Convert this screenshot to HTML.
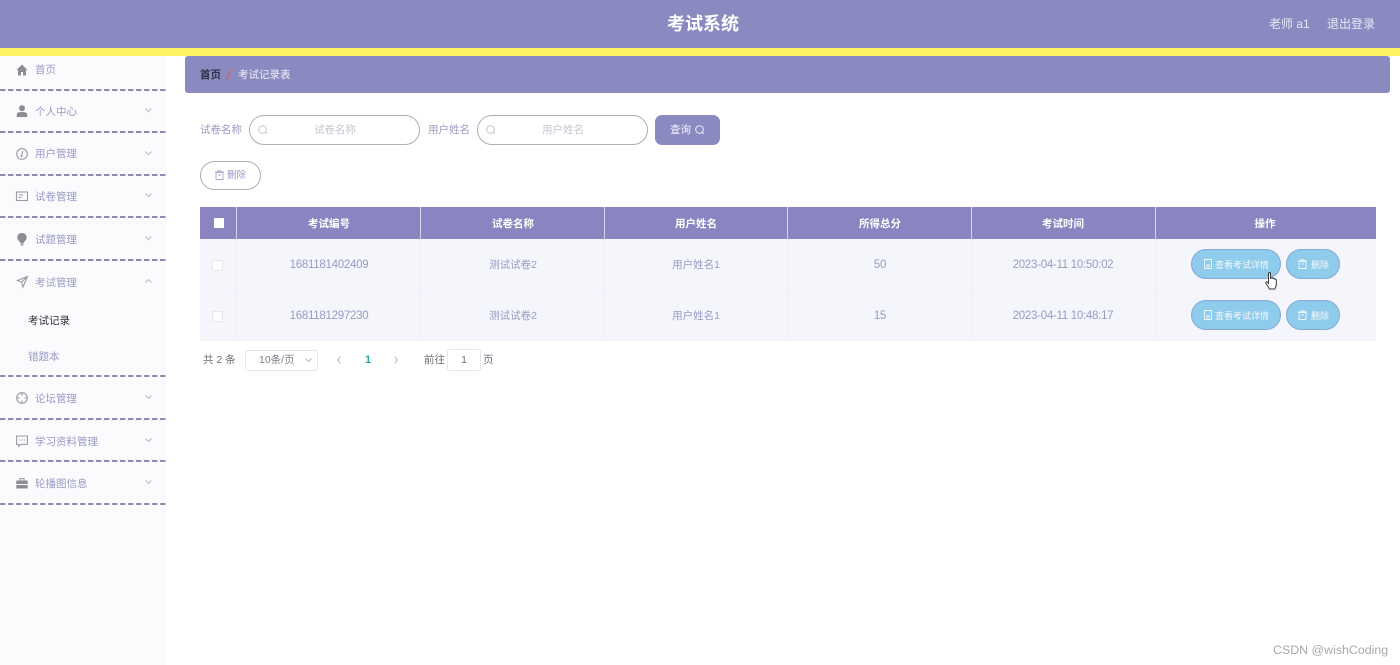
<!DOCTYPE html>
<html lang="zh"><head><meta charset="utf-8"><title>考试系统</title>
<style>
*{box-sizing:border-box}
html,body{margin:0;padding:0;width:1400px;height:665px;overflow:hidden;background:#fff}
body{position:relative;font-family:"Liberation Sans","Noto Sans CJK SC",sans-serif;font-size:10.5px;color:#9a9ac4}
#w{position:absolute;left:0;top:0;width:1400px;height:665px;overflow:hidden;filter:blur(.35px)}
.a{position:absolute;white-space:nowrap;line-height:1}
.c{transform:translateX(-50%)}
.n{font-size:11.5px;letter-spacing:-.28px}
.dash{position:absolute;left:0;width:167px;height:2px;background:repeating-linear-gradient(90deg,#8e8eb2 0,#8e8eb2 5.5px,transparent 5.5px,transparent 8px)}
.th{color:#fff;font-weight:bold}
.vl{position:absolute;top:207px;width:1px;height:32px;background:#d6d6ea}
.vr{position:absolute;top:239px;width:1px;height:102px;background:#f0f1f8}
.pill{position:absolute;height:30px;border-radius:15px;background:#8fcbea;border:1px solid #84abd2;color:#f4fafd;font-size:9px;line-height:30px;white-space:nowrap}
.cb{position:absolute;left:212px;width:11px;height:11px;background:#fff;border:1px solid #e6e6ef;border-radius:2px}
.inp{position:absolute;top:115px;height:30px;width:171px;border:1px solid #aeaeb8;border-radius:15px;background:#fff}
svg{position:absolute;overflow:visible}
.s{fill:none;stroke:#9b9ba3;stroke-width:1.1}
.ch{fill:none;stroke:#b4b4c4;stroke-width:.9}
</style></head><body><div id="w">
<div style="position:absolute;left:0;top:0;width:1400px;height:48px;background:#8a8ac1"></div>
<div style="position:absolute;left:0;top:48px;width:1400px;height:8px;background:#fdf464"></div>
<div class="a c" style="left:703px;top:15px;font-size:18px;font-weight:bold;color:#fff">考试系统</div>
<div class="a" style="left:1269px;top:18px;font-size:12px;color:#e9e9f5">老师 a1</div>
<div class="a" style="left:1327px;top:18px;font-size:12px;color:#e9e9f5">退出登录</div>

<div style="position:absolute;left:0;top:56px;width:167px;height:609px;background:#fbfbfe"></div>
<div class="dash" style="top:89px"></div>
<div class="dash" style="top:131px"></div>
<div class="dash" style="top:174px"></div>
<div class="dash" style="top:216px"></div>
<div class="dash" style="top:259px"></div>
<div class="dash" style="top:375px"></div>
<div class="dash" style="top:418px"></div>
<div class="dash" style="top:460px"></div>
<div class="dash" style="top:503px"></div>

<svg style="left:16px;top:64px" width="12" height="12"><path d="M6 .5 .5 6H2v5.500h3V8h2v3.500h3V6h1.500z" fill="#8c8c94"/></svg>
<div class="a" style="left:35px;top:65px">首页</div>
<svg style="left:16px;top:105px" width="12" height="12"><circle cx="6" cy="3.200" r="3" fill="#8c8c94"/><path d="M.8 12V9.500C.8 7.500 3 7 6 7s5.200.5 5.200 2.500V12z" fill="#8c8c94"/></svg>
<div class="a" style="left:35px;top:107px">个人中心</div>
<svg style="left:16px;top:148px" width="12" height="12"><circle class="s" cx="6" cy="6" r="5.300"/><path class="s" d="M6.800 3 5.800 7"/><circle cx="5.600" cy="8" r="1.100" fill="#9b9ba3"/></svg>
<div class="a" style="left:35px;top:149px">用户管理</div>
<svg style="left:16px;top:191px" width="12" height="11"><rect class="s" x=".5" y="1" width="11" height="8.500"/><path class="s" d="M3 4h4M3 6.500h2.500"/></svg>
<div class="a" style="left:35px;top:192px">试卷管理</div>
<svg style="left:17px;top:233px" width="11" height="13"><path d="M5 0C2 0 .3 2 .3 4.500.3 7 3 8.500 3.500 10.500h3C7 8.500 9.700 7 9.700 4.500 9.700 2 8 0 5 0z" fill="#8c8c94"/><rect x="3.800" y="11" width="2.500" height="1.500" fill="#8c8c94"/></svg>
<div class="a" style="left:35px;top:235px">试题管理</div>
<svg style="left:17px;top:276px" width="11" height="12"><path class="s" d="M10.500.5.500 4.500l4 1.500 1.500 5zM4.500 6l6-5.500"/></svg>
<div class="a" style="left:35px;top:278px">考试管理</div>
<div class="a" style="left:28px;top:316px;color:#2c2c34">考试记录</div>
<div class="a" style="left:28px;top:352px">错题本</div>
<svg style="left:16px;top:392px" width="12" height="12"><circle class="s" cx="6" cy="6" r="5.300"/><path class="s" d="M6 .5v3M6 8.500v3M.5 6h3M8.500 6h3"/></svg>
<div class="a" style="left:35px;top:394px">论坛管理</div>
<svg style="left:16px;top:435px" width="12" height="12"><path class="s" d="M.6 1h10.800v8.300H5L2.600 11.300V9.300H.6z"/><path d="M3 5h1.200M5.400 5h1.200M7.800 5H9" stroke="#9b9ba3" stroke-width="1.100"/></svg>
<div class="a" style="left:35px;top:437px">学习资料管理</div>
<svg style="left:16px;top:477px" width="12" height="12"><path d="M.3 3.500h11.400V7H.3zM.3 8h11.400v3.500H.3z" fill="#8c8c94"/><path class="s" d="M4 3.500V1.500h4v2"/></svg>
<div class="a" style="left:35px;top:479px">轮播图信息</div>

<svg style="left:145px;top:108px" width="7" height="4"><path class="ch" d="M.5.500 3.500 3.500 6.500.5"/></svg>
<svg style="left:145px;top:151px" width="7" height="4"><path class="ch" d="M.5.500 3.500 3.500 6.500.5"/></svg>
<svg style="left:145px;top:193px" width="7" height="4"><path class="ch" d="M.5.500 3.500 3.500 6.500.5"/></svg>
<svg style="left:145px;top:236px" width="7" height="4"><path class="ch" d="M.5.500 3.500 3.500 6.500.5"/></svg>
<svg style="left:145px;top:279px" width="7" height="4"><path class="ch" d="M.5 3.500 3.500.5 6.500 3.500"/></svg>
<svg style="left:145px;top:395px" width="7" height="4"><path class="ch" d="M.5.500 3.500 3.500 6.500.5"/></svg>
<svg style="left:145px;top:438px" width="7" height="4"><path class="ch" d="M.5.500 3.500 3.500 6.500.5"/></svg>
<svg style="left:145px;top:480px" width="7" height="4"><path class="ch" d="M.5.500 3.500 3.500 6.500.5"/></svg>

<div style="position:absolute;left:185px;top:56px;width:1205px;height:37px;background:#8a8ac1;border-radius:3px"></div>
<div class="a" style="left:200px;top:70px;color:#2d2d45;font-weight:bold">首页</div>
<svg style="left:226px;top:69px" width="6" height="11"><path d="M4.500.5 1 10.500" stroke="#d9605e" stroke-width="1.200" fill="none"/></svg>
<div class="a" style="left:238px;top:70px;color:#f2f2f8">考试记录表</div>

<div class="a" style="left:200px;top:125px">试卷名称</div>
<div class="inp" style="left:249px"></div>
<svg style="left:258px;top:125px" width="10" height="10"><circle cx="4.500" cy="4.500" r="3.800" fill="none" stroke="#c4c4cc"/><path d="m7.300 7.300 1.500 1.500" stroke="#c4c4cc"/></svg>
<div class="a" style="left:314px;top:125px;color:#c6c6d2">试卷名称</div>
<div class="a" style="left:428px;top:125px">用户姓名</div>
<div class="inp" style="left:477px"></div>
<svg style="left:486px;top:125px" width="10" height="10"><circle cx="4.500" cy="4.500" r="3.800" fill="none" stroke="#c4c4cc"/><path d="m7.300 7.300 1.500 1.500" stroke="#c4c4cc"/></svg>
<div class="a" style="left:542px;top:125px;color:#c6c6d2">用户姓名</div>
<div style="position:absolute;left:655px;top:115px;width:65px;height:30px;border-radius:7px;background:#8a8ac1"></div>
<div class="a" style="left:670px;top:125px;color:#f4f4fa">查询</div>
<svg style="left:695px;top:125px" width="10" height="10"><circle cx="4.500" cy="4.500" r="3.800" fill="none" stroke="#f0f0f8"/><path d="m7.300 7.300 1.500 1.500" stroke="#f0f0f8"/></svg>

<div style="position:absolute;left:200px;top:161px;width:61px;height:29px;border:1px solid #aeaeb8;border-radius:15px;background:#fff"></div>
<svg style="left:215px;top:170px" width="9" height="10"><path d="M1 2.500h7v7H1zM0 2h9M3 2V.7h3V2M3 5h3" fill="none" stroke="#a8a8c8" stroke-width=".9"/></svg>
<div class="a" style="left:227px;top:171px;font-size:9.500px">删除</div>

<div style="position:absolute;left:200px;top:207px;width:1176px;height:32px;background:#8a85c0"></div>
<div style="position:absolute;left:200px;top:239px;width:1176px;height:102px;background:#f5f6fb"></div>
<div class="vl" style="left:236px"></div><div class="vl" style="left:420px"></div><div class="vl" style="left:604px"></div><div class="vl" style="left:787px"></div><div class="vl" style="left:971px"></div><div class="vl" style="left:1155px"></div>
<div class="vr" style="left:236px"></div><div class="vr" style="left:420px"></div><div class="vr" style="left:604px"></div><div class="vr" style="left:787px"></div><div class="vr" style="left:971px"></div><div class="vr" style="left:1155px"></div>
<div style="position:absolute;left:200px;top:290px;width:1176px;height:1px;background:#f0f1f8"></div>
<div style="position:absolute;left:214px;top:218px;width:10px;height:10px;background:#fff;border-radius:1px"></div>
<div class="a c th" style="left:329px;top:219px">考试编号</div>
<div class="a c th" style="left:513px;top:219px">试卷名称</div>
<div class="a c th" style="left:696px;top:219px">用户姓名</div>
<div class="a c th" style="left:880px;top:219px">所得总分</div>
<div class="a c th" style="left:1063px;top:219px">考试时间</div>
<div class="a c th" style="left:1265px;top:219px">操作</div>

<div class="cb" style="top:260px"></div><div class="cb" style="top:311px"></div>
<div class="a c n" style="left:329px;top:260px">1681181402409</div>
<div class="a c" style="left:513px;top:260px">测试试卷2</div>
<div class="a c" style="left:696px;top:260px">用户姓名1</div>
<div class="a c n" style="left:880px;top:260px">50</div>
<div class="a c n" style="left:1063px;top:260px">2023-04-11 10:50:02</div>
<div class="a c n" style="left:329px;top:311px">1681181297230</div>
<div class="a c" style="left:513px;top:311px">测试试卷2</div>
<div class="a c" style="left:696px;top:311px">用户姓名1</div>
<div class="a c n" style="left:880px;top:311px">15</div>
<div class="a c n" style="left:1063px;top:311px">2023-04-11 10:48:17</div>

<div class="pill" style="left:1191px;top:249px;width:90px;padding-left:23px">查看考试详情</div>
<div class="pill" style="left:1286px;top:249px;width:54px;padding-left:24px">删除</div>
<div class="pill" style="left:1191px;top:300px;width:90px;padding-left:23px">查看考试详情</div>
<div class="pill" style="left:1286px;top:300px;width:54px;padding-left:24px">删除</div>
<svg style="left:1204px;top:259px" width="8" height="10"><path d="M.5.500h7v9h-7zM2 6h4M2 7.800h4" fill="none" stroke="#eef7fc" stroke-width=".9"/></svg>
<svg style="left:1204px;top:310px" width="8" height="10"><path d="M.5.500h7v9h-7zM2 6h4M2 7.800h4" fill="none" stroke="#eef7fc" stroke-width=".9"/></svg>
<svg style="left:1298px;top:259px" width="9" height="10"><path d="M1 2.500h7v7H1zM0 2h9M3 2V.7h3V2M3 5h3" fill="none" stroke="#eef7fc" stroke-width=".9"/></svg>
<svg style="left:1298px;top:310px" width="9" height="10"><path d="M1 2.500h7v7H1zM0 2h9M3 2V.7h3V2M3 5h3" fill="none" stroke="#eef7fc" stroke-width=".9"/></svg>
<svg style="left:1265px;top:272px" width="13" height="18"><path d="M3.500 1.500c0-1.300 2-1.300 2 0V7l.3-1c1-.6 1.800-.2 2 .5.800-.5 1.600-.1 1.800.6.800-.3 1.700.1 1.700 1.100v4.300c0 2-1 3.500-1.500 4.500H4.500C3.500 15 2.300 13.500 1 11.500c-.7-1.300.5-2.300 1.500-1.300l1 1.200z" fill="#fff" stroke="#3a3a3a" stroke-width="1"/></svg>

<div class="a" style="left:203px;top:355px;color:#6e6e78">共 2 条</div>
<div style="position:absolute;left:245px;top:350px;width:73px;height:21px;border:1px solid #e4e4ec;border-radius:3px;background:#fff"></div>
<div class="a" style="left:259px;top:355px;color:#7d7d88;font-size:10.500px">10条/页</div>
<svg style="left:305px;top:358px" width="7" height="4"><path class="ch" d="M.5.500 3.500 3.500 6.500.5"/></svg>
<svg style="left:337px;top:356px" width="5" height="8"><path d="M3.500.5.500 4l3 3.500" fill="none" stroke="#b8b8c4"/></svg>
<div class="a" style="left:365px;top:355px;color:#26a69a;font-weight:bold;font-size:11px">1</div>
<svg style="left:394px;top:356px" width="5" height="8"><path d="M.5.500 3.500 4l-3 3.500" fill="none" stroke="#b8b8c4"/></svg>
<div class="a" style="left:424px;top:355px;color:#6e6e78">前往</div>
<div style="position:absolute;left:447px;top:349px;width:34px;height:22px;border:1px solid #e4e4ec;border-radius:3px;background:#fff"></div>
<div class="a c" style="left:464px;top:355px;color:#6e6e78">1</div>
<div class="a" style="left:483px;top:355px;color:#6e6e78">页</div>

<div class="a" style="left:1273px;top:644px;font-size:12.400px;color:#a8a8a8">CSDN @wishCoding</div>
</div></body></html>
